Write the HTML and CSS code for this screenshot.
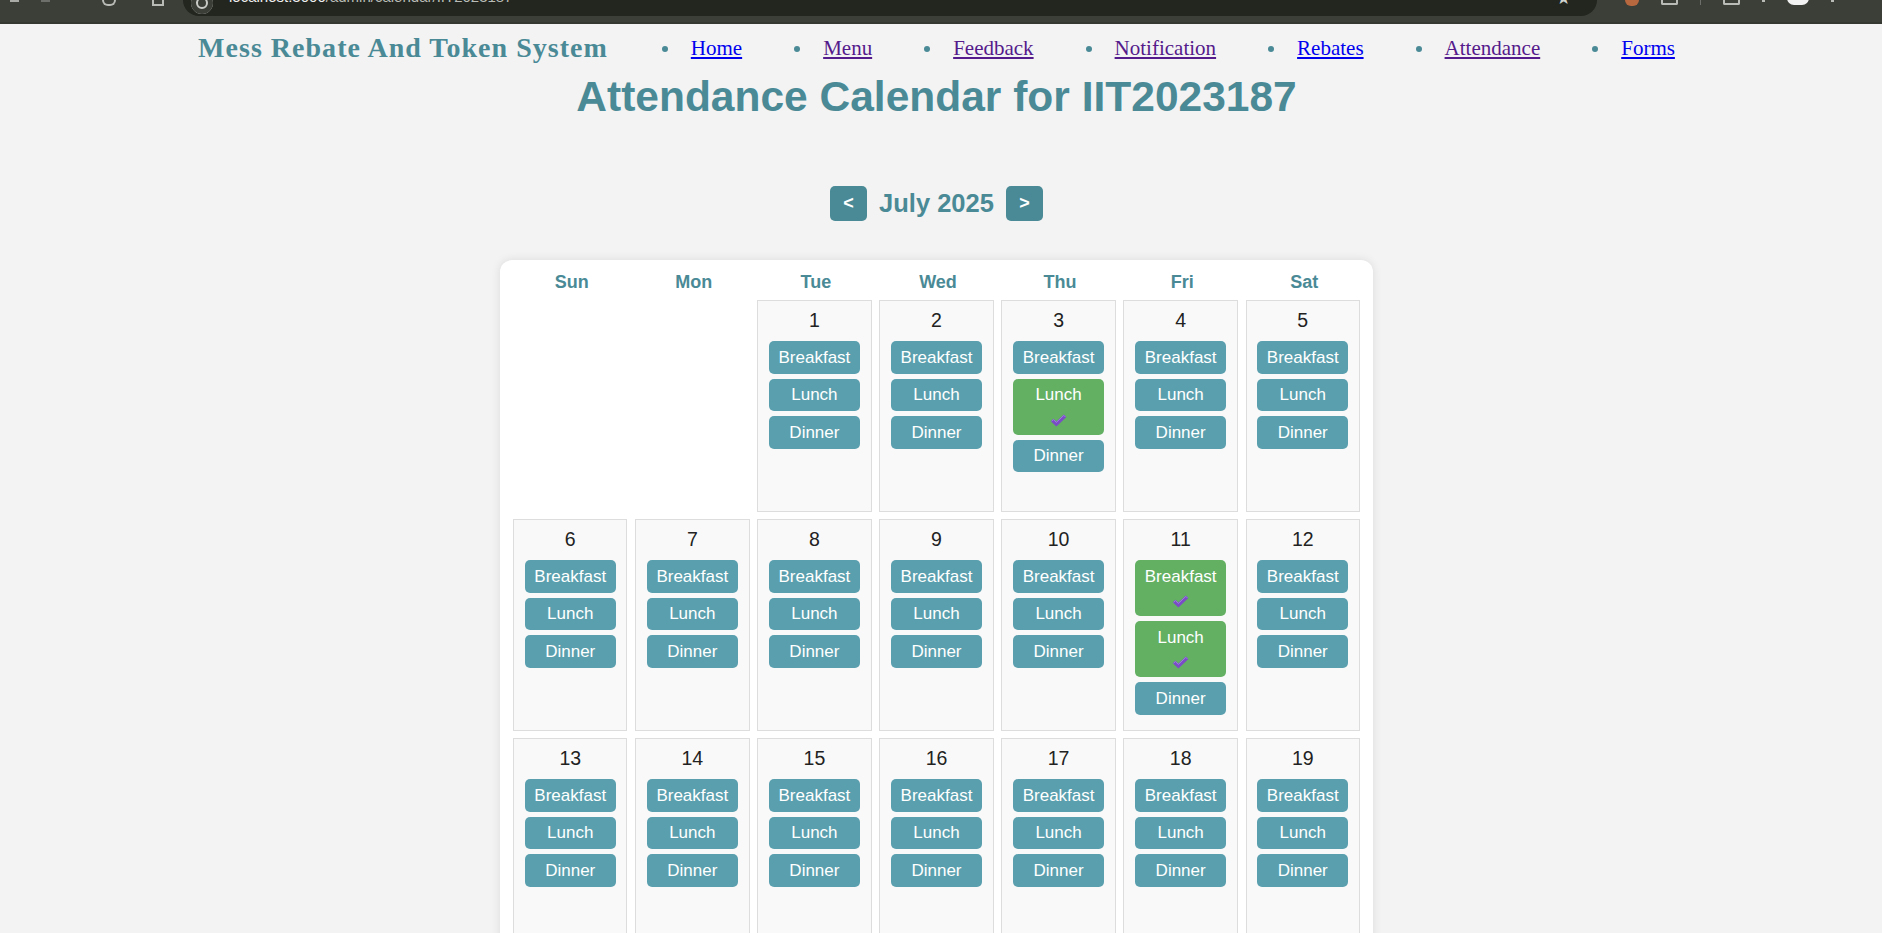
FILE: index.html
```html
<!DOCTYPE html>
<html lang="en">
<head>
<meta charset="utf-8">
<title>Attendance Calendar</title>
<link rel="stylesheet" href="styles.css">
</head>
<body>
<div class="chrome">
  <div class="chrome-left">
    <span class="ci ci-arrow"></span>
    <span class="ci ci-arrow dim"></span>
    <span class="ci ci-reload"></span>
    <span class="ci ci-grid"></span>
  </div>
  <div class="omnibox">
    <span class="omni-icon"></span>
    <span class="omni-url">localhost:3000<span class="omni-path">/admin/calendar/IIT2023187</span></span>
    <span class="omni-star">★</span>
  </div>
  <div class="chrome-right">
    <span class="ci ci-ext"></span>
    <span class="ci ci-box"></span>
    <span class="ci ci-sep"></span>
    <span class="ci ci-box"></span>
    <span class="ci ci-dot"></span>
    <span class="ci ci-avatar"></span>
    <span class="ci ci-dot"></span>
  </div>
</div>
<div class="chrome-line"></div>

<div class="main">
  <nav class="topnav">
    <div class="brand">Mess Rebate And Token System</div>
    <ul class="links">
      <li><a href="#" class="new">Home</a></li>
      <li><a href="#" class="seen">Menu</a></li>
      <li><a href="#" class="seen">Feedback</a></li>
      <li><a href="#" class="seen">Notification</a></li>
      <li><a href="#" class="new">Rebates</a></li>
      <li><a href="#" class="seen">Attendance</a></li>
      <li><a href="#" class="new">Forms</a></li>
    </ul>
  </nav>

  <h1 class="page-title">Attendance Calendar for IIT2023187</h1>

  <div class="month-nav">
    <button class="month-btn">&lt;</button>
    <span class="month-label">July 2025</span>
    <button class="month-btn">&gt;</button>
  </div>

  <div class="card">
    <div class="grid">
      <div class="dow">Sun</div><div class="dow">Mon</div><div class="dow">Tue</div><div class="dow">Wed</div><div class="dow">Thu</div><div class="dow">Fri</div><div class="dow">Sat</div>

      <div class="blank"></div>
      <div class="blank"></div>
      <div class="day"><div class="num">1</div><div class="meals"><button class="meal">Breakfast</button><button class="meal">Lunch</button><button class="meal">Dinner</button></div></div>
      <div class="day"><div class="num">2</div><div class="meals"><button class="meal">Breakfast</button><button class="meal">Lunch</button><button class="meal">Dinner</button></div></div>
      <div class="day"><div class="num">3</div><div class="meals"><button class="meal">Breakfast</button><button class="meal taken">Lunch<span class="tick"><svg viewBox="0 0 17 13" width="17" height="13"><path d="M0.8 7.2 L3.4 4.8 L6.4 7.6 L13.8 0.6 L16.4 3.1 L6.4 12.4 Z" fill="#7a4cc6"/><path d="M1.6 7.2 L3.4 5.6 L6.4 8.4 L13.8 1.4 L15.4 3" fill="none" stroke="#a27ee6" stroke-width="0.9"/></svg></span></button><button class="meal">Dinner</button></div></div>
      <div class="day"><div class="num">4</div><div class="meals"><button class="meal">Breakfast</button><button class="meal">Lunch</button><button class="meal">Dinner</button></div></div>
      <div class="day"><div class="num">5</div><div class="meals"><button class="meal">Breakfast</button><button class="meal">Lunch</button><button class="meal">Dinner</button></div></div>

      <div class="day"><div class="num">6</div><div class="meals"><button class="meal">Breakfast</button><button class="meal">Lunch</button><button class="meal">Dinner</button></div></div>
      <div class="day"><div class="num">7</div><div class="meals"><button class="meal">Breakfast</button><button class="meal">Lunch</button><button class="meal">Dinner</button></div></div>
      <div class="day"><div class="num">8</div><div class="meals"><button class="meal">Breakfast</button><button class="meal">Lunch</button><button class="meal">Dinner</button></div></div>
      <div class="day"><div class="num">9</div><div class="meals"><button class="meal">Breakfast</button><button class="meal">Lunch</button><button class="meal">Dinner</button></div></div>
      <div class="day"><div class="num">10</div><div class="meals"><button class="meal">Breakfast</button><button class="meal">Lunch</button><button class="meal">Dinner</button></div></div>
      <div class="day"><div class="num">11</div><div class="meals"><button class="meal taken">Breakfast<span class="tick"><svg viewBox="0 0 17 13" width="17" height="13"><path d="M0.8 7.2 L3.4 4.8 L6.4 7.6 L13.8 0.6 L16.4 3.1 L6.4 12.4 Z" fill="#7a4cc6"/><path d="M1.6 7.2 L3.4 5.6 L6.4 8.4 L13.8 1.4 L15.4 3" fill="none" stroke="#a27ee6" stroke-width="0.9"/></svg></span></button><button class="meal taken">Lunch<span class="tick"><svg viewBox="0 0 17 13" width="17" height="13"><path d="M0.8 7.2 L3.4 4.8 L6.4 7.6 L13.8 0.6 L16.4 3.1 L6.4 12.4 Z" fill="#7a4cc6"/><path d="M1.6 7.2 L3.4 5.6 L6.4 8.4 L13.8 1.4 L15.4 3" fill="none" stroke="#a27ee6" stroke-width="0.9"/></svg></span></button><button class="meal">Dinner</button></div></div>
      <div class="day"><div class="num">12</div><div class="meals"><button class="meal">Breakfast</button><button class="meal">Lunch</button><button class="meal">Dinner</button></div></div>

      <div class="day"><div class="num">13</div><div class="meals"><button class="meal">Breakfast</button><button class="meal">Lunch</button><button class="meal">Dinner</button></div></div>
      <div class="day"><div class="num">14</div><div class="meals"><button class="meal">Breakfast</button><button class="meal">Lunch</button><button class="meal">Dinner</button></div></div>
      <div class="day"><div class="num">15</div><div class="meals"><button class="meal">Breakfast</button><button class="meal">Lunch</button><button class="meal">Dinner</button></div></div>
      <div class="day"><div class="num">16</div><div class="meals"><button class="meal">Breakfast</button><button class="meal">Lunch</button><button class="meal">Dinner</button></div></div>
      <div class="day"><div class="num">17</div><div class="meals"><button class="meal">Breakfast</button><button class="meal">Lunch</button><button class="meal">Dinner</button></div></div>
      <div class="day"><div class="num">18</div><div class="meals"><button class="meal">Breakfast</button><button class="meal">Lunch</button><button class="meal">Dinner</button></div></div>
      <div class="day"><div class="num">19</div><div class="meals"><button class="meal">Breakfast</button><button class="meal">Lunch</button><button class="meal">Dinner</button></div></div>

      <div class="day"><div class="num">20</div><div class="meals"><button class="meal">Breakfast</button><button class="meal">Lunch</button><button class="meal">Dinner</button></div></div>
      <div class="day"><div class="num">21</div><div class="meals"><button class="meal">Breakfast</button><button class="meal">Lunch</button><button class="meal">Dinner</button></div></div>
      <div class="day"><div class="num">22</div><div class="meals"><button class="meal">Breakfast</button><button class="meal">Lunch</button><button class="meal">Dinner</button></div></div>
      <div class="day"><div class="num">23</div><div class="meals"><button class="meal">Breakfast</button><button class="meal">Lunch</button><button class="meal">Dinner</button></div></div>
      <div class="day"><div class="num">24</div><div class="meals"><button class="meal">Breakfast</button><button class="meal">Lunch</button><button class="meal">Dinner</button></div></div>
      <div class="day"><div class="num">25</div><div class="meals"><button class="meal">Breakfast</button><button class="meal">Lunch</button><button class="meal">Dinner</button></div></div>
      <div class="day"><div class="num">26</div><div class="meals"><button class="meal">Breakfast</button><button class="meal">Lunch</button><button class="meal">Dinner</button></div></div>

      <div class="day"><div class="num">27</div><div class="meals"><button class="meal">Breakfast</button><button class="meal">Lunch</button><button class="meal">Dinner</button></div></div>
      <div class="day"><div class="num">28</div><div class="meals"><button class="meal">Breakfast</button><button class="meal">Lunch</button><button class="meal">Dinner</button></div></div>
      <div class="day"><div class="num">29</div><div class="meals"><button class="meal">Breakfast</button><button class="meal">Lunch</button><button class="meal">Dinner</button></div></div>
      <div class="day"><div class="num">30</div><div class="meals"><button class="meal">Breakfast</button><button class="meal">Lunch</button><button class="meal">Dinner</button></div></div>
      <div class="day"><div class="num">31</div><div class="meals"><button class="meal">Breakfast</button><button class="meal">Lunch</button><button class="meal">Dinner</button></div></div>
      <div class="blank"></div>
      <div class="blank"></div>
    </div>
  </div>
</div>
</body>
</html>
```

FILE: styles.css
```css
html {
  scrollbar-width: none;
}

body {
  margin: 0;
  background: #f3f3f3;
  font-family: "Liberation Sans", Arial, sans-serif;
}

/* ---------- browser chrome strip ---------- */
.chrome {
  height: 22px;
  background: #3b3f38;
  display: flex;
  align-items: flex-start;
  overflow: hidden;
}

.chrome-line {
  height: 2px;
  background: #343831;
}

.chrome-left {
  width: 183px;
  display: flex;
  gap: 22px;
  padding-left: 10px;
  box-sizing: border-box;
}

.ci {
  display: block;
  flex: none;
}

.ci-arrow {
  width: 9px;
  height: 2px;
  background: #a9aba6;
}

.ci-arrow.dim {
  background: #6d706a;
}

.ci-reload {
  width: 10px;
  height: 4px;
  margin-left: 30px;
  border-radius: 0 0 6px 6px;
  border: 2px solid #b9bbb6;
  border-top: none;
}

.ci-grid {
  width: 8px;
  height: 4px;
  margin-left: 14px;
  border: 2px solid #b9bbb6;
  border-top: none;
}

.omnibox {
  flex: 0 0 1414px;
  height: 30px;
  margin-top: -14px;
  background: #22261f;
  border-radius: 0 0 16px 16px;
  display: flex;
  align-items: flex-end;
  padding: 0 14px 0 8px;
  box-sizing: border-box;
}

.omni-icon {
  width: 22px;
  height: 22px;
  margin-bottom: 2px;
  border-radius: 50%;
  background: #3a3e37;
  box-shadow: inset 0 0 0 5px #3a3e37, inset 0 0 0 7px #c9cbc6;
}

.omni-url {
  margin-left: 16px;
  margin-bottom: 12px;
  font-size: 15px;
  line-height: 15px;
  color: #f0f0f0;
}

.omni-path {
  color: #b9bcb6;
}

.omni-star {
  margin-left: auto;
  margin-bottom: 9px;
  margin-right: 12px;
  color: #d0d2cd;
  font-size: 17px;
  line-height: 17px;
}

.chrome-right {
  display: flex;
  align-items: flex-start;
  padding-left: 28px;
  gap: 22px;
}

.ci-ext {
  width: 14px;
  height: 6px;
  border-radius: 0 0 7px 7px;
  background: #b8683f;
}

.ci-box {
  width: 13px;
  height: 3px;
  border: 2px solid #b9bbb6;
  border-top: none;
  border-radius: 0 0 2px 2px;
}

.ci-sep {
  width: 1px;
  height: 5px;
  background: #6d706a;
}

.ci-dot {
  width: 3px;
  height: 2px;
  background: #b9bbb6;
}

.ci-avatar {
  width: 22px;
  height: 7px;
  margin-top: -2px;
  border-radius: 0 0 11px 11px;
  background: #f2f2f2;
}

/* ---------- page ---------- */
.main {
  padding-right: 9px;
}

.topnav {
  height: 48px;
  display: flex;
  justify-content: center;
  align-items: center;
}

.brand {
  font-family: "Liberation Serif", "Times New Roman", serif;
  font-weight: bold;
  font-size: 28px;
  letter-spacing: 1.02px;
  color: #4a8a96;
  white-space: nowrap;
}

.links {
  list-style: none;
  margin: 0 0 0 54px;
  padding: 0;
  display: flex;
  align-items: center;
  gap: 52px;
}

.links li {
  display: flex;
  align-items: center;
}

.links li::before {
  content: "";
  width: 6px;
  height: 6px;
  border-radius: 50%;
  background: #4a8a96;
  margin-right: 23px;
  margin-top: 1px;
}

.links a {
  font-family: "Liberation Serif", "Times New Roman", serif;
  font-size: 21px;
  text-decoration: underline;
}

.links a.new {
  color: #0000ee;
}

.links a.seen {
  color: #551a8b;
}

.page-title {
  margin: 1px 0 65px;
  text-align: center;
  font-size: 42.5px;
  font-weight: bold;
  line-height: normal;
  color: #4a8a96;
}

.month-nav {
  display: flex;
  justify-content: center;
  align-items: center;
  gap: 12px;
  margin-bottom: 39px;
}

.month-btn {
  width: 37px;
  height: 35px;
  padding: 0;
  border: none;
  border-radius: 5px;
  background: #4a8a96;
  color: #ffffff;
  font-family: "Liberation Sans", Arial, sans-serif;
  font-weight: bold;
  font-size: 18px;
}

.month-label {
  font-size: 25.5px;
  font-weight: bold;
  color: #4a8a96;
}

.card {
  width: 873px;
  box-sizing: border-box;
  margin: 0 auto 30px;
  padding: 12px 13px 13px;
  background: #ffffff;
  border-radius: 12px;
  box-shadow: 0 0 10px rgba(0, 0, 0, 0.1);
}

.grid {
  display: grid;
  grid-template-columns: repeat(7, 1fr);
  gap: 7px 7.6px;
}

.dow {
  text-align: center;
  font-size: 18px;
  font-weight: bold;
  color: #4a8a96;
  padding-left: 3px;
}

.day {
  box-sizing: border-box;
  min-height: 212px;
  padding: 8px 0 8px;
  background: #f9f9f9;
  border: 1px solid #dddddd;
  text-align: center;
}

.num {
  font-size: 19.5px;
  line-height: 22px;
  color: #222222;
}

.meals {
  margin-top: 10px;
  display: flex;
  flex-direction: column;
  align-items: center;
  gap: 4.8px;
}

.meal {
  display: block;
  width: 91px;
  padding: 6.5px 0;
  border: none;
  border-radius: 5px;
  background: #5a9fae;
  color: #ffffff;
  font-family: "Liberation Sans", Arial, sans-serif;
  font-size: 17px;
  line-height: 19.7px;
}

.meal.taken {
  background: #63b063;
  padding-bottom: 5px;
}

.tick {
  display: block;
  height: 25px;
  padding-top: 9px;
  box-sizing: border-box;
}

.tick svg {
  display: block;
  margin: 0 auto;
}
```
